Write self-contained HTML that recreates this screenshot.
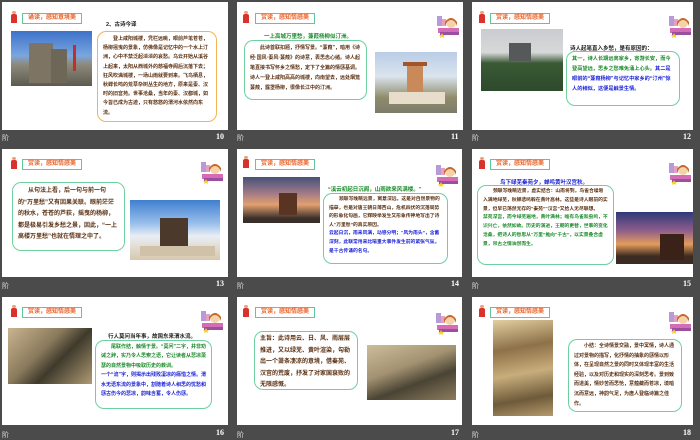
<!DOCTYPE html>
<html><head><meta charset="utf-8"><style>
*{margin:0;padding:0;box-sizing:border-box}
body{width:700px;height:438px;background:#4b4b4b;position:relative;overflow:hidden;font-family:"Liberation Sans","Noto Sans CJK SC",sans-serif}
.s{position:absolute;background:#fff;width:226px;height:128px;overflow:hidden}
.a{position:absolute}
.lbl{position:absolute;color:#ddd;font-size:7px}
.num{position:absolute;color:#fff;font-size:8px;font-weight:bold;font-family:"Liberation Serif",serif}
.t{position:absolute;border:1px solid #5fc79a;background:#fff;color:#e8632a;font-size:6px;font-weight:bold;line-height:9px;padding:0 3px;height:11px;width:60px;text-align:center}
.ic{position:absolute;width:6px;height:9px;background:#d9322c;border-radius:2px 2px 0 0}
.ic:before{content:"";position:absolute;left:1px;top:-3px;width:4px;height:3px;border-radius:50%;background:#e9a07a}
.g{position:absolute;width:24px;height:24px}
.b{position:absolute;border:1px solid #6fd09f;border-radius:9px;font-size:5px;line-height:9.3px;padding:2px 5px;color:#5a2f10;text-indent:10px;overflow:hidden;font-weight:bold}
.h{position:absolute;font-size:5.5px;font-weight:bold;white-space:nowrap}
.bl{color:#1b23d6}.gr{color:#1a8a2a}
</style></head><body>

<svg width="0" height="0" style="position:absolute"><defs>
<g id="girl"><rect x="1" y="2" width="5" height="10" fill="#b79bd8"/><rect x="6" y="5" width="4" height="7" fill="#e7a1bf"/><circle cx="15" cy="9" r="5" fill="#f6d2a8"/><path d="M9 8 Q15 0 21 8 L21 12 Q19 6 15 6 Q11 6 9 12Z" fill="#c4672b"/><rect x="2" y="14" width="21" height="5" fill="#d46cb6"/><rect x="4" y="18" width="19" height="3" fill="#9a4fa0"/><polygon points="6,19 7,21 9,21 7.5,22.5 8,24 6,23 4,24 4.5,22.5 3,21 5,21" fill="#f5d22b"/></g>
</defs></svg>

<!-- Slide 10 -->
<div class="s" style="left:2px;top:2px">
<div class="ic" style="left:9px;top:12px"></div>
<div class="t" style="left:20px;top:11px">诵读，感知意境美</div>
<div class="a" style="left:9px;top:29px;width:81px;height:55px;background:linear-gradient(180deg,#3d72c9 0%,#7aa6e0 45%,#8f8a7d 60%,#5c5a4f 100%)"><div class="a" style="left:18px;top:12px;width:24px;height:40px;background:#7d7464"></div><div class="a" style="left:40px;top:18px;width:16px;height:34px;background:#6e6656"></div><div class="a" style="left:62px;top:14px;width:3px;height:26px;background:#c0302a"></div></div>
<div class="h" style="left:104px;top:18px;color:#222">2、古诗今译</div>
<div class="b" style="left:95px;top:29px;width:120px;height:91px;border-color:#f2b455;line-height:9.2px;padding:3px 5px">登上咸阳城楼，凭栏远眺，眼前芦苇苍苍，杨柳摇曳的景象，仿佛像是记忆中的一个水上汀洲，心中不禁泛起淡淡的哀愁。乌云开始从溪谷上起来，太阳从西城外的慈福寺阁后沉落下去；狂风吹满城楼，一场山雨就要到来。飞鸟栖息，秋蝉长鸣的荒草杂树丛生的地方，原来是秦、汉时的旧宫苑。世事沧桑，当年的秦、汉都城，如今皆已成为古迹，只有悠悠的渭河水依然向东流。</div>
</div>
<div class="lbl" style="left:2px;top:133px">阶</div><div class="num" style="left:216px;top:132px">10</div>

<!-- Slide 11 -->
<div class="s" style="left:237px;top:2px">
<div class="ic" style="left:6px;top:12px"></div>
<div class="t" style="left:18px;top:11px">赏读，感知情感美</div>
<svg class="g" style="left:199px;top:12px" viewBox="0 0 24 24"><use href="#girl"/></svg>
<div class="h gr" style="left:27px;top:30px">一上高城万里愁，蒹葭杨柳似汀洲。</div>
<div class="b" style="left:7px;top:38px;width:123px;height:60px;line-height:10px">此诗首联扣题，抒情写景。“蒹葭”，暗用《诗经·国风·秦风·蒹葭》的诗意，表思念心绪。诗人起笔直接书写怀乡之情愁，定下了全篇的情感基调。诗人一登上咸阳高高的城楼，向南望去，远处烟笼蒹葭，露罩杨柳，很像长江中的汀洲。</div>
<div class="a" style="left:138px;top:50px;width:82px;height:61px;background:linear-gradient(180deg,#b9cde6 0%,#dbe4ee 40%,#8e8c6a 75%,#7c7b6a 100%)"><div class="a" style="left:32px;top:10px;width:16px;height:40px;background:#c98a5a"></div><div class="a" style="left:28px;top:10px;width:24px;height:4px;background:#a3542c"></div><div class="a" style="left:14px;top:40px;width:56px;height:12px;background:#e8dccb"></div></div>
</div>
<div class="lbl" style="left:237px;top:133px">阶</div><div class="num" style="left:451px;top:132px">11</div>

<!-- Slide 12 -->
<div class="s" style="left:472px;top:2px;width:221px">
<div class="ic" style="left:7px;top:12px"></div>
<div class="t" style="left:18px;top:11px">赏读，感知情感美</div>
<svg class="g" style="left:196px;top:12px" viewBox="0 0 24 24"><use href="#girl"/></svg>
<div class="a" style="left:9px;top:27px;width:82px;height:62px;background:linear-gradient(180deg,#c9ccd0 0%,#d7d8d9 38%,#3a5a35 55%,#2d4a2c 100%)"><div class="a" style="left:28px;top:14px;width:22px;height:18px;background:#56595a"></div></div>
<div class="h" style="left:98px;top:42px;color:#222">诗人起笔直入乡愁，是有原因的：</div>
<div class="b" style="left:94px;top:49px;width:114px;height:55px;text-indent:0;font-size:5.2px;line-height:10px">
<span class="gr">其一，诗人长期远离家乡，寄游长安，而今登高望远，思乡之愁难免涌上心头。</span><span class="bl">其二是眼前的“蒹葭杨柳”与记忆中家乡的“汀州”惊人的相似，这便是触景生情。</span></div>
</div>
<div class="lbl" style="left:472px;top:133px">阶</div><div class="num" style="left:683px;top:132px">12</div>

<!-- Slide 13 -->
<div class="s" style="left:2px;top:149px">
<div class="ic" style="left:9px;top:11px"></div>
<div class="t" style="left:20px;top:10px">赏读，感知情感美</div>
<svg class="g" style="left:198px;top:11px" viewBox="0 0 24 24"><use href="#girl"/></svg>
<div class="b" style="left:10px;top:33px;width:113px;height:69px;font-size:6px;line-height:11.5px;padding:3px 5px">从句法上看，后一句与前一句的“万里愁”又有因果关联。眼前茫茫的秋水，苍苍的芦荻，摇曳的杨柳，都是极易引发乡愁之景，因此，“一上高楼万里愁”也就在情理之中了。</div>
<div class="a" style="left:128px;top:51px;width:90px;height:60px;background:linear-gradient(180deg,#3f7fd0 0%,#9cc1ec 40%,#e9eef5 60%,#d8c8ac 100%)"><div class="a" style="left:30px;top:18px;width:28px;height:30px;background:#4b3a2c"></div><div class="a" style="left:10px;top:46px;width:75px;height:10px;background:#cfc2a8"></div></div>
</div>
<div class="lbl" style="left:2px;top:281px">阶</div><div class="num" style="left:216px;top:279px">13</div>

<!-- Slide 14 -->
<div class="s" style="left:237px;top:149px;width:225px">
<div class="ic" style="left:6px;top:10px"></div>
<div class="t" style="left:18px;top:10px">赏读，感知情感美</div>
<svg class="g" style="left:198px;top:14px" viewBox="0 0 24 24"><use href="#girl"/></svg>
<div class="a" style="left:6px;top:28px;width:77px;height:46px;background:linear-gradient(180deg,#46517a 0%,#a07a86 35%,#e3a070 60%,#3a2e2a 90%)"><div class="a" style="left:36px;top:16px;width:18px;height:22px;background:#5a3422"></div></div>
<div class="h gr" style="left:91px;top:36px">“溪云初起日沉阁，山雨欲来风满楼。”</div>
<div class="b" style="left:86px;top:44px;width:125px;height:71px;font-size:4.8px;line-height:8.6px;padding:2px 5px">
<span>颔联写晚眺远景，寓意深远。这是对自然景物的描摹，也是对唐王朝日薄西山，危机四伏的沉落局势的形象化勾画，它辉映举发生又形象传神地写出了诗人“万里愁”的真实原因。</span><br><span class="bl">云起日沉，雨来风满，动感分明；“风为雨头”，含蓄深刻，此联常用来比喻重大事件发生前的紧张气氛，是千古传诵的名句。</span></div>
</div>
<div class="lbl" style="left:237px;top:281px">阶</div><div class="num" style="left:451px;top:279px">14</div>

<!-- Slide 15 -->
<div class="s" style="left:472px;top:149px;width:221px">
<div class="ic" style="left:7px;top:11px"></div>
<div class="t" style="left:18px;top:10px">赏读，感知情感美</div>
<svg class="g" style="left:196px;top:12px" viewBox="0 0 24 24"><use href="#girl"/></svg>
<div class="h bl" style="left:28px;top:29px">鸟下绿芜秦苑夕，蝉鸣黄叶汉宫秋。</div>
<div class="b" style="left:5px;top:36px;width:137px;height:80px;font-size:4.8px;line-height:8.8px;padding:2px 5px">
<span>颈联写晚眺近景，虚实结合：山雨将到，鸟雀合噪匆入满地绿芜，秋蝉悲鸣躲在黄叶高林。这些是诗人眼前的实景，但早已荡然无存的“秦苑”“汉宫”又给人无尽联想。</span><br><span class="gr">禁苑深宫，而今绿芜遍地，黄叶满林；唯有鸟雀和虫鸣，不识兴亡，依然如故。历史的演进，王朝的更替，世事的变化沧桑，把诗人的愁思从“万里”推向“千古”，以实景叠合虚景，吊古之情油然而生。</span></div>
<div class="a" style="left:144px;top:63px;width:77px;height:52px;background:linear-gradient(180deg,#2f3a78 0%,#8c5c8c 35%,#e49c5c 62%,#3b2b22 85%)"><div class="a" style="left:44px;top:22px;width:24px;height:26px;background:#3a2218"></div></div>
</div>
<div class="lbl" style="left:472px;top:281px">阶</div><div class="num" style="left:683px;top:279px">15</div>

<!-- Slide 16 -->
<div class="s" style="left:2px;top:297px">
<div class="ic" style="left:9px;top:11px"></div>
<div class="t" style="left:20px;top:10px">赏读，感知情感美</div>
<svg class="g" style="left:198px;top:12px" viewBox="0 0 24 24"><use href="#girl"/></svg>
<div class="a" style="left:6px;top:31px;width:84px;height:56px;background:linear-gradient(135deg,#c9b48f 0%,#8a7a5c 40%,#3e3a2c 60%,#b09a74 100%)"></div>
<div class="h" style="left:106px;top:35px;color:#222">行人莫问当年事，故国东来渭水流。</div>
<div class="b" style="left:93px;top:43px;width:117px;height:69px;font-size:5px;line-height:9.4px">
<span class="gr">尾联作结，触情于景。“莫问”二字，并非劝诫之辞，实乃令人思索之语，它让读者从悲凉萧瑟的自然景物中吸取历史的教训。</span><br><span class="bl">一个“流”字，则揭示出残败凄凉的痛惜之情。渭水无语东流的景象中，割随着诗人相思的忧愁和感古伤今的悲凉，韵味含蓄，令人伤感。</span></div>
</div>
<div class="lbl" style="left:2px;top:430px">阶</div><div class="num" style="left:216px;top:428px">16</div>

<!-- Slide 17 -->
<div class="s" style="left:237px;top:297px;width:225px">
<div class="ic" style="left:6px;top:11px"></div>
<div class="t" style="left:18px;top:10px">赏读，感知情感美</div>
<svg class="g" style="left:198px;top:14px" viewBox="0 0 24 24"><use href="#girl"/></svg>
<div class="b" style="left:17px;top:34px;width:104px;height:59px;font-size:6px;line-height:11.5px;text-indent:0;padding:2px 5px">主旨：此诗用云、日、风、雨层层推进，又以绿芜、黄叶渲染，勾勒出一个萧条凄凉的意境，借秦苑、汉宫的荒废，抒发了对家国衰败的无限感慨。</div>
<div class="a" style="left:130px;top:48px;width:89px;height:55px;background:linear-gradient(160deg,#cbbd9c 0%,#a39272 40%,#4a4434 65%,#8d7c5d 100%)"></div>
</div>
<div class="lbl" style="left:237px;top:430px">阶</div><div class="num" style="left:451px;top:428px">17</div>

<!-- Slide 18 -->
<div class="s" style="left:472px;top:297px;width:221px">
<div class="ic" style="left:7px;top:11px"></div>
<div class="t" style="left:18px;top:10px">赏读，感知情感美</div>
<svg class="g" style="left:196px;top:13px" viewBox="0 0 24 24"><use href="#girl"/></svg>
<div class="a" style="left:21px;top:23px;width:60px;height:96px;background:linear-gradient(170deg,#e2cfa0 0%,#8e7148 30%,#c8ad7c 55%,#6e5a3a 80%,#b59a6c 100%)"></div>
<div class="b" style="left:96px;top:42px;width:114px;height:73px;font-size:5px;line-height:9.6px">小结：全诗情景交融，景中寓情，诗人通过对景物的描写，化抒情的抽象的感情以形体，在呈现自然之景的同时又体现丰富的生活经验，以及对历史和现实的深刻思考。景到致而道美，情妙苦而思怆，意蕴藏而苍凉，境暗沉而意远，神韵气足，为唐人登临诗篇之佳作。</div>
</div>
<div class="lbl" style="left:472px;top:430px">阶</div><div class="num" style="left:683px;top:428px">18</div>

</body></html>
